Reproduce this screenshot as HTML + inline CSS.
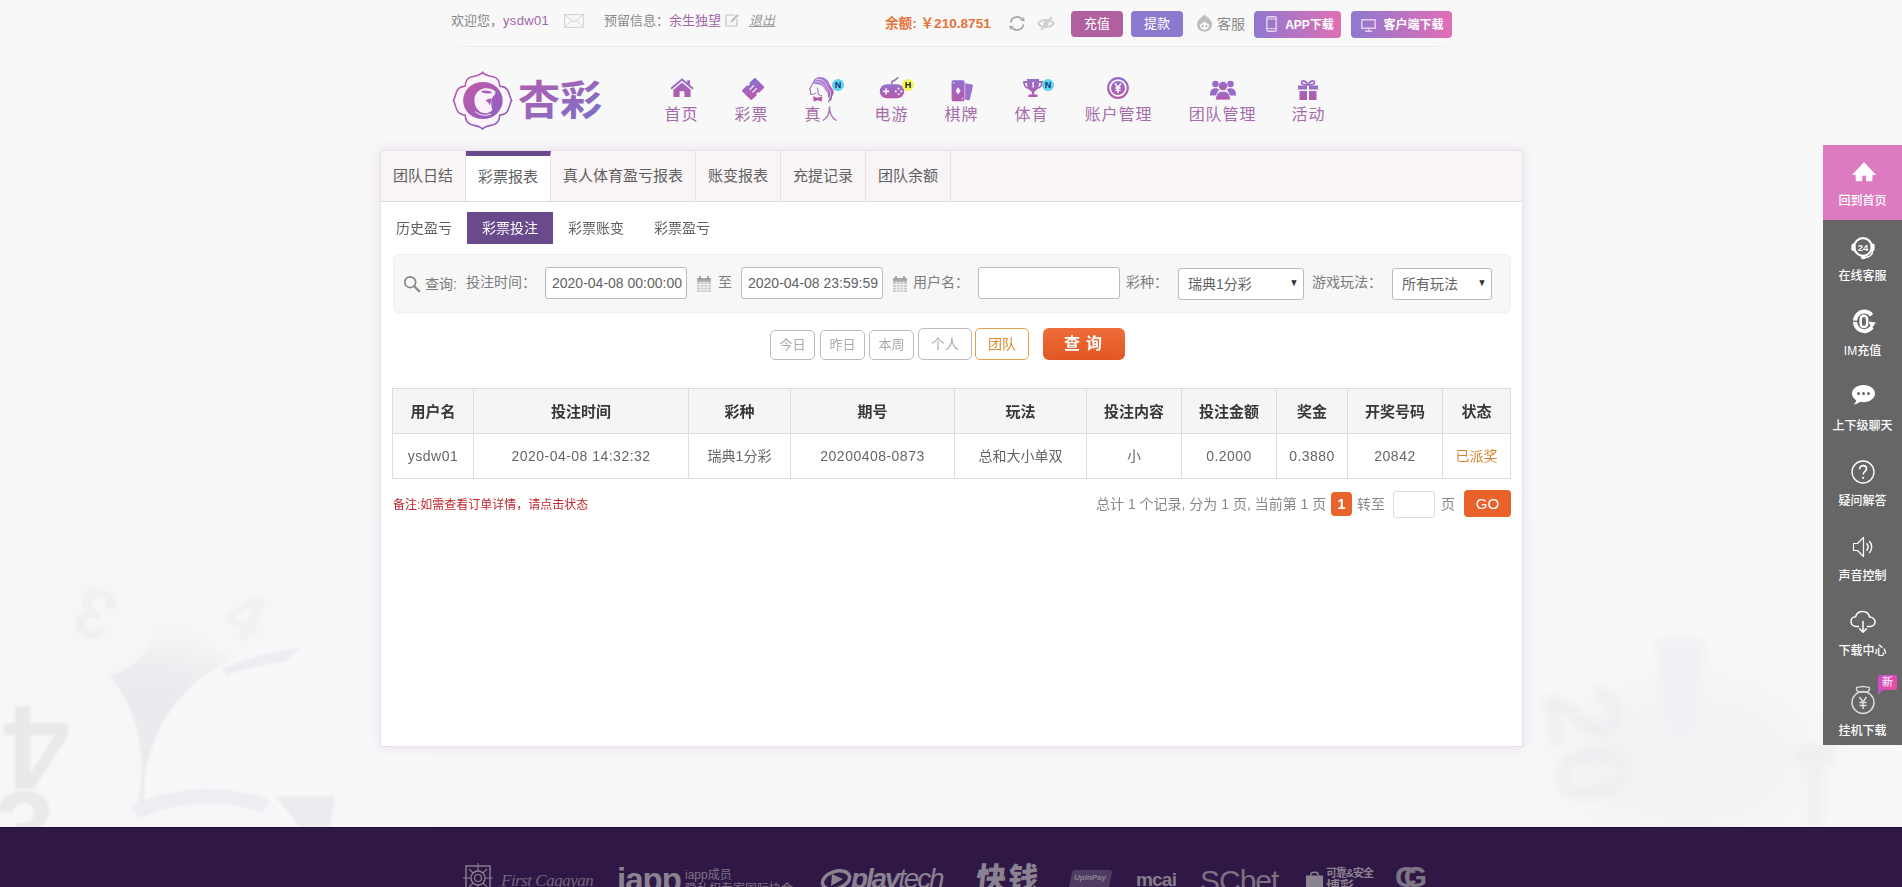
<!DOCTYPE html>
<html lang="zh-CN">
<head>
<meta charset="utf-8">
<title>彩票投注</title>
<style>
*{box-sizing:border-box;margin:0;padding:0}
html,body{width:1902px;height:887px;overflow:hidden}
body{font-family:"Liberation Sans","Noto Sans CJK SC",sans-serif;font-size:13px;color:#666;background:#f8f8f8;position:relative}
a{text-decoration:none;color:inherit}
.abs{position:absolute}
/* background decoration */
#bg{position:absolute;left:0;top:0;width:1902px;height:827px;overflow:hidden}
/* top bar */
#top{position:absolute;left:451px;top:0;width:1001px;height:47px}
#top:after{content:"";position:absolute;left:-5px;right:-5px;top:46px;height:1px;background:linear-gradient(90deg,rgba(233,233,233,0),#e9e9e9 3%,#e9e9e9 97%,rgba(233,233,233,0))}
#top span,#top a{position:absolute;white-space:nowrap;line-height:20px;font-size:13px}
.btn{position:absolute;color:#fff;border-radius:4px;text-align:center;font-size:14px}
/* nav */
#nav{position:absolute;left:451px;top:60px;width:1001px;height:80px}
.ni{position:absolute;top:0;height:80px;text-align:center;color:#a56caa;font-size:16px}
.ni span{position:absolute;left:1px;right:0;top:44px;line-height:22px;white-space:nowrap;letter-spacing:.9px}
.ni svg{position:absolute}
.bd{position:absolute;width:12px;height:12px;border-radius:6px;font:bold 9px/12px "Liberation Sans",sans-serif;text-align:center;font-style:normal}
/* panel */
#panel{position:absolute;left:380px;top:150px;width:1143px;height:597px;background:#fff;border:1px solid #eadfee;box-shadow:0 0 12px rgba(190,160,210,.28)}
#tabs{position:absolute;left:0;top:0;width:1141px;height:51px;background:#f9f5f6;border-bottom:1px solid #ddd}
.tab{position:absolute;top:0;height:50px;line-height:50px;font-size:15px;color:#606060;text-align:center;border-right:1px solid #e6e0e4}
.tab.on{background:#fff;border-top:5px solid #6a4a8c;line-height:41px;height:50px}
.sub{position:absolute;top:61px;height:32px;line-height:32px;font-size:14px;color:#606060;text-align:center}
.sub.on{background:#6a4a8c;color:#fff}
#q{position:absolute;left:12px;top:103px;width:1118px;height:59px;background:#f7f7f7;border:1px solid #f0f0f0;border-radius:6px}
#q span{position:absolute;white-space:nowrap;font-size:14px;color:#7c7c7c;line-height:20px}
.inp{position:absolute;height:32px;background:#fff;border:1px solid #bbb;border-radius:3px;font-size:14px;color:#626262;line-height:30px;white-space:nowrap}
.qb{position:absolute;top:179px;height:30px;border:1px solid #bbb;border-radius:5px;font-size:13px;color:#aaa;text-align:center;line-height:28px;background:#fff}
table{position:absolute;left:11px;top:237px;border-collapse:collapse;width:1118px;table-layout:fixed}
th,td{border:1px solid #ddd;text-align:center;height:45px;font-size:14px;color:#666;font-weight:normal;white-space:nowrap;overflow:hidden}
th{background:#f5f5f5;color:#383838;font-weight:bold;font-size:15px;padding-bottom:1px}
td.l{letter-spacing:.48px}
td.c{padding-bottom:2px}
.ar{position:absolute;right:4px;top:-1px;font-size:10px;font-weight:normal;color:#333;transform:scaleX(.9)}
/* side */
#side{position:absolute;left:1823px;top:145px;width:79px;height:600px;background:#666}
.si{position:absolute;left:0;width:79px;height:75px;color:#fff;font-size:12px;font-weight:500;text-align:center}
.si span{position:absolute;left:0;right:0;top:47px;line-height:18px;white-space:nowrap}
.si svg{position:absolute}
/* footer */
#foot{position:absolute;left:0;top:827px;width:1902px;height:60px;background:#2f1845;overflow:hidden;box-shadow:inset 0 1px 0 #221136}
#foot .g{position:absolute;color:#8a8290;white-space:nowrap}
</style>
</head>
<body>
<div id="bg">
 <svg width="1902" height="827" viewBox="0 0 1902 827" style="position:absolute;left:0;top:0">
  <defs>
   <filter id="b1" filterUnits="userSpaceOnUse" x="-300" y="300" width="2600" height="900"><feGaussianBlur stdDeviation="22"/></filter>
   <filter id="b2"><feGaussianBlur stdDeviation="1.200"/></filter>
   <filter id="b3"><feGaussianBlur stdDeviation="4"/></filter>
   <linearGradient id="bgf" x1="0" y1="0" x2="0" y2="1"><stop offset="0" stop-color="#f8f8f8"/><stop offset=".55" stop-color="#f8f8f8"/><stop offset="1" stop-color="#f7f7f8"/></linearGradient>
  </defs>
  <rect width="1902" height="827" fill="url(#bgf)"/>
  <!-- left cluster -->
  <ellipse cx="140" cy="735" rx="130" ry="90" fill="#ebebef" filter="url(#b1)"/>
  <g filter="url(#b2)">
   <circle cx="95" cy="615" r="62" fill="#f6f6f7"/>
   <circle cx="262" cy="600" r="66" fill="#f6f6f8"/>
   <text x="78" y="650" font-family="'Liberation Sans',sans-serif" font-weight="bold" font-size="70" fill="#f0f0f3" transform="rotate(200 95 620)">3</text>
   <text x="230" y="640" font-family="'Liberation Sans',sans-serif" font-weight="bold" font-size="66" fill="#f1f1f4" transform="rotate(25 250 610)">4</text>
   <circle cx="-8" cy="768" r="150" fill="#f7f7f8"/>
   <circle cx="292" cy="795" r="148" fill="#f8f8f9"/>
   <path d="M222 668 Q262 652 300 648 L286 662 Q254 664 226 676 Z" fill="#ececf3"/>
   <text x="-30" y="790" font-family="'Liberation Sans',sans-serif" font-weight="bold" font-size="120" fill="#e9e9ec" transform="rotate(180 20 748)">4</text>
   <text x="-6" y="868" font-family="'Liberation Sans',sans-serif" font-weight="bold" font-size="110" fill="#eaeaed">3</text>
   <circle cx="205" cy="905" r="120" fill="#f7f7f9"/>
   <path d="M130 806 Q200 776 270 800 L262 812 Q200 792 140 818 Z" fill="#ededf2"/>
   <path d="M275 796 L335 796 L330 827 L300 827 Z" fill="#ececf0"/>
  </g>
  <!-- right cluster -->
  <ellipse cx="1690" cy="760" rx="120" ry="80" fill="#f3f3f5" filter="url(#b1)"/>
  <g filter="url(#b3)">
   <path d="M1655 640 L1705 640 L1690 735 L1672 735 Z" fill="#f0f0f4"/>
   <text transform="translate(1543 694) rotate(80)" font-family="'Liberation Sans',sans-serif" font-weight="bold" font-size="104" fill="#eeeef1">20</text>
   <path d="M1795 745 H1835 V765 H1822 V827 H1808 V765 H1795 Z" fill="#efeff1"/>
  </g>
 </svg>
</div>

<div id="top">
 <span style="left:0;top:11px;color:#888">欢迎您，<a style="position:static;color:#a066a8;letter-spacing:.35px">ysdw01</a></span>
 <span style="left:153px;top:11px;color:#888">预留信息：<a style="position:static;color:#a066a8">余生独望</a></span>
 <a style="left:298px;top:11px;color:#999;font-style:italic;text-decoration:underline">退出</a>
 <span style="left:434px;top:14px;color:#e6733c;font-weight:bold;font-size:13.600px">余额: ￥210.8751</span>
 <a class="btn" style="left:620px;top:11px;width:52px;height:26px;line-height:26px;background:#b0609f">充值</a>
 <a class="btn" style="left:680px;top:11px;width:52px;height:26px;line-height:26px;background:#8b78cf">提款</a>

 <svg class="abs" style="left:113px;top:14px" width="20" height="14" viewBox="0 0 20 14"><rect x=".6" y=".6" width="18.800" height="12.800" fill="none" stroke="#d4d4d4" stroke-width="1.100"/><path d="M.6 .6 L10 8 L19.400 .6 M.6 13.400 L7.600 6.200 M19.400 13.400 L12.400 6.200" fill="none" stroke="#d4d4d4" stroke-width="1"/></svg>
 <svg class="abs" style="left:274px;top:13px" width="15" height="14" viewBox="0 0 15 14"><path d="M10 2 H1 V13 H12 V6" fill="none" stroke="#c4c4c4" stroke-width="1.200"/><path d="M5.500 9.500 L6.200 7 L12.200 1 L14 2.800 L8 8.800 Z" fill="#c4c4c4"/></svg>
 <svg class="abs" style="left:557px;top:15px" width="18" height="17" viewBox="0 0 18 17"><path d="M2.600 7.600 A6.400 6.400 0 0 1 14.600 5.400 M15.400 9.400 A6.400 6.400 0 0 1 3.400 11.600" fill="none" stroke="#a8a8a8" stroke-width="1.700"/><path d="M12.300 6 L16.800 6.300 L15.800 2 Z M5.700 11 L1.200 10.700 L2.200 15 Z" fill="#a8a8a8"/></svg>
 <svg class="abs" style="left:586px;top:16px" width="18" height="15" viewBox="0 0 18 15"><path d="M1.200 7.500 C4 2.800 14 2.800 16.800 7.500 C14 12.200 4 12.200 1.200 7.500 Z" fill="none" stroke="#cfcfcf" stroke-width="2"/><circle cx="9" cy="7.500" r="2.600" fill="#cfcfcf"/><path d="M14.600 1.200 L4.200 13.800" stroke="#cfcfcf" stroke-width="2"/></svg>
 <svg class="abs" style="left:745px;top:14px" width="17" height="18" viewBox="0 0 17 18"><path d="M8.500 .5 C9.500 2.500 16 5 16 10.500 C16 15 12.500 17.500 8.500 17.500 C4.500 17.500 1 15 1 10.500 C1 5 7.500 2.500 8.500 .5 Z" fill="#bdbdbd"/><path d="M3.800 10.500 C5.500 9.800 6.800 9 8.500 7.500 C10.200 9 11.500 9.800 13.200 10.500 C13.200 14 11 15.800 8.500 15.800 C6 15.800 3.800 14 3.800 10.500 Z" fill="#f8f8f8"/><circle cx="6.600" cy="12.200" r=".9" fill="#999"/><circle cx="10.400" cy="12.200" r=".9" fill="#999"/></svg>
 <span style="left:766px;top:14px;color:#888;font-size:14px">客服</span>
 <a class="btn" style="left:803px;top:11px;width:87px;height:27px;line-height:29px;font-size:12px;font-weight:bold;background:linear-gradient(90deg,#8f78d0,#e06fb4);padding-left:24px"><svg style="position:absolute;left:12px;top:5px" width="11" height="16" viewBox="0 0 11 16"><rect x=".8" y=".8" width="9.400" height="14.400" rx="1.500" fill="none" stroke="#e9d3f3" stroke-width="1.400"/><path d="M1 3 H10 M1 12.600 H10" stroke="#e9d3f3" stroke-width="1"/></svg>APP下载</a>
 <a class="btn" style="left:900px;top:11px;width:101px;height:27px;line-height:29px;font-size:12px;font-weight:bold;background:linear-gradient(90deg,#8f78d0,#e06fb4);padding-left:24px"><svg style="position:absolute;left:10px;top:8px" width="15" height="13" viewBox="0 0 15 13"><rect x=".8" y=".8" width="13.400" height="8.400" fill="none" stroke="#e6cdf0" stroke-width="1.500"/><path d="M7.500 9 V12 M4 12.200 H11" stroke="#e6cdf0" stroke-width="1.500"/></svg>客户端下载</a>
</div>

<div id="nav">
 <!-- logo -->
 <svg class="abs" style="left:0;top:8px" width="160" height="66" viewBox="0 0 160 66">
  <defs>
   <linearGradient id="lg1" x1="0" y1="0" x2="1" y2="1"><stop offset="0" stop-color="#c45aa8"/><stop offset="1" stop-color="#8a62c4"/></linearGradient>
   <linearGradient id="lg2" x1="0" y1="0" x2="1" y2="1"><stop offset="0" stop-color="#b65cb0"/><stop offset="1" stop-color="#7672c8"/></linearGradient>
  </defs>
  <path d="M31.500 4.200 C29 7.500 24 8 20.700 8.700 C17 9.500 14.500 12 14.200 18.100 C11 18.500 8.500 19.500 7.300 20.900 C4.500 24 4.500 29 2.400 32.500 C4.500 36 4.500 41 7.300 44.200 C8.500 45.600 11 46.600 14.200 47.100 C14.500 53 17 55.800 20.700 56.800 C24 57.500 29 58 31.500 61.100 C34 58 39 57.500 42.300 56.800 C46 55.800 48.500 53 48.800 47.100 C52 46.600 54.500 45.600 55.700 44.200 C58.500 41 58.500 36 60.600 32.500 C58.500 29 58.500 24 55.700 20.900 C54.500 19.500 52 18.500 48.800 18.100 C48.500 12 46 9.500 42.300 8.700 C39 8 34 7.500 31.500 4.200 Z" fill="#fcf5fc" stroke="url(#lg1)" stroke-width="1.600" stroke-linejoin="round"/>
  <ellipse cx="31.900" cy="32.500" rx="19.800" ry="18.600" fill="url(#lg1)"/>
  <path d="M29.600 21.700 C34 19.300 40 19.800 44.400 23.400 C45 25.500 43 27.500 41 30 C39.500 33 40.500 38 41.400 42 C38 45.800 33.500 45.800 30.500 44.600 C26.500 42.600 23.400 38 23.400 31.500 C23.400 27 26 23.500 29.600 21.700 Z" fill="#fbf2fb"/>
  <path d="M29.500 23.600 C33 21.800 38 22.200 41.500 24.600 C38 26 33 25.800 29.500 23.600 Z" fill="url(#lg1)"/>
  <path d="M40.200 30.500 C37 30.500 35.200 31.800 34.600 33.600 C36.600 33.400 38 34.800 38.400 37.500 C39.600 35.500 40.400 33 40.200 30.500 Z" fill="url(#lg1)"/>
  <path d="M24 43.500 C28 47 34 48.500 40 46" fill="none" stroke="#fbf2fb" stroke-width="1"/>
  <text x="67" y="47" font-family="'Liberation Sans','Noto Sans CJK SC',sans-serif" font-weight="700" font-size="41" fill="url(#lg2)" textLength="84" lengthAdjust="spacingAndGlyphs">杏彩</text>
 </svg>
 <svg width="0" height="0" style="position:absolute"><defs>
  <linearGradient id="ig" x1="0" y1="0" x2="0" y2="1"><stop offset="0" stop-color="#9470cc"/><stop offset="1" stop-color="#b45aaa"/></linearGradient>
  <linearGradient id="ig2" x1="0" y1="0" x2="1" y2="1"><stop offset="0" stop-color="#8f72d2"/><stop offset="1" stop-color="#c05aa6"/></linearGradient>
 </defs></svg>
 <div class="ni" style="left:180px;width:100px">
  <svg style="left:38px;top:17px" width="26" height="21" viewBox="0 0 26 21"><path d="M13 1.2 L18.2 5.6 V3.2 H21 V8 L24.6 11 L23.3 12.4 L13 3.8 L2.7 12.4 L1.4 11 Z M13 5.6 L21.6 12.8 V20 H15.4 V14.2 H10.6 V20 H4.4 V12.8 Z" fill="url(#ig)"/></svg>
  <span>首页</span></div>
 <div class="ni" style="left:250px;width:100px">
  <svg style="left:41px;top:18px" width="23" height="23" viewBox="0 0 23 23"><defs><linearGradient id="ig3" gradientUnits="userSpaceOnUse" x1="5" y1="-7" x2="-5" y2="7"><stop offset="0" stop-color="#8a6ed2"/><stop offset="1" stop-color="#bc5aac"/></linearGradient></defs><g transform="translate(11.100 11) rotate(-45)"><path d="M-9.400 -5.600 A1.300 1.300 0 0 1 -8.100 -6.900 H-1.500 A1.500 1.500 0 0 0 1.500 -6.900 H8.100 A1.300 1.300 0 0 1 9.400 -5.600 V5.600 A1.300 1.300 0 0 1 8.100 6.900 H1.500 A1.500 1.500 0 0 0 -1.500 6.900 H-8.100 A1.300 1.300 0 0 1 -9.400 5.600 Z" fill="url(#ig3)"/><path d="M-3 -2 H3.200 M-3 2 H3.200" stroke="#f3e6f8" stroke-width="1.300"/></g></svg>
  <span>彩票</span></div>
 <div class="ni" style="left:320px;width:100px">
  <svg style="left:37px;top:16px" width="27" height="28" viewBox="0 0 27 28"><defs><linearGradient id="gh" x1="0" y1="0" x2="1" y2="1"><stop offset="0" stop-color="#a48cdc"/><stop offset=".6" stop-color="#b06cc0"/><stop offset="1" stop-color="#8a5a9a"/></linearGradient></defs><path d="M4.600 7.200 C5 3.400 8.500 .8 12.500 1 C17 1.200 20 4 21.200 7.500 C22 10 24.800 12.200 25.600 15.200 C26.400 18.200 23.600 19.600 24 22 C24.300 24 21.500 25 20 26.800 C19.600 25.400 21.800 23.800 20.600 21.800 C19.400 19.800 20.600 17.400 18.400 15.600 C16.400 14 16.600 11 14 9.400 C11.600 7.900 8 8.400 4.600 7.200 Z" fill="url(#gh)"/><path d="M8 3.600 C13 2.400 17.500 5 18.600 9.400 C19.400 12.400 22.400 13.600 22.600 16.800 C22.800 19.400 21.600 21 22 23" fill="none" stroke="#f3eafa" stroke-width=".7"/><path d="M7 5.600 C11.500 5 15.400 7 16.600 10.600 C17.400 13.200 20 14.600 20.200 17.400" fill="none" stroke="#f3eafa" stroke-width=".6"/><path d="M4.600 7.200 C3.600 9.400 3.400 10.800 1.600 13.200 C2.600 13.800 2.800 14.600 2.400 15.600 C2.800 16.400 3 17.400 2.800 18.400 C4.800 18.800 6.400 18.200 7.600 17.200 M9.400 12 C10.200 13.600 10.400 15.400 9.800 17.400 C10.600 18.800 12.200 19.600 13.800 19.800" fill="none" stroke="#9b78bc" stroke-width="1.100" stroke-linecap="round"/><path d="M5 20.200 L9.400 21.800 L14.400 20.600 L13.600 25.400 L9.400 24.200 L5.800 25.800 Z" fill="#b85aa6"/></svg>
  <i class="bd" style="left:61px;top:19px;background:#5fd2ee;color:#0f3a70">N</i>
  <span>真人</span></div>
 <div class="ni" style="left:390px;width:100px">
  <svg style="left:38px;top:16px" width="27" height="24" viewBox="0 0 27 24"><path d="M12.800 7.800 C12.600 4.800 14.400 4.600 15.800 4.200 C17.200 3.800 17.200 2.400 19 1.600" fill="none" stroke="#8f6fae" stroke-width="1.500" stroke-linecap="round"/><rect x=".8" y="8.200" width="24.400" height="14" rx="7" fill="url(#ig)"/><path d="M6.300 12.300 h1.600 v2.300 h2.300 v1.600 h-2.300 v2.300 h-1.600 v-2.300 h-2.300 v-1.600 h2.300 Z" fill="#f6ecfa"/><circle cx="19.600" cy="12.600" r="1.050" fill="#f6ecfa"/><circle cx="19.600" cy="18.200" r="1.050" fill="#f6ecfa"/><circle cx="16.800" cy="15.400" r="1.050" fill="#f6ecfa"/><circle cx="22.400" cy="15.400" r="1.050" fill="#f6ecfa"/></svg>
  <i class="bd" style="left:61px;top:19px;background:#f3f35c;color:#222">H</i>
  <span>电游</span></div>
 <div class="ni" style="left:460px;width:100px">
  <svg style="left:40px;top:19px" width="24" height="24" viewBox="0 0 24 24"><path d="M14.200 4.200 L21 5.400 Q22.300 5.700 22 7 L18.800 20.400 Q18.500 21.600 17.200 21.300 L14.200 20.600 Z" fill="#9c72cc"/><rect x=".6" y="1.200" width="13" height="21" rx="1.600" fill="url(#ig)"/><path d="M7.100 8.200 L9.600 11.800 L7.100 15.400 L4.600 11.800 Z" fill="#fbf0fb"/><path d="M2 3 L3.600 3 L2.800 5.200 Z M12.200 20.400 L10.600 20.400 L11.400 18.200 Z" fill="#f3def3"/></svg>
  <span>棋牌</span></div>
 <div class="ni" style="left:530px;width:100px">
  <svg style="left:41px;top:18px" width="22" height="20" viewBox="0 0 22 20"><path d="M5 1 H17 V3 H21 C21 8 18.500 10.500 15.500 11 C14.500 12.500 13.200 13.300 12.200 13.600 V16.500 H15.500 V19 H6.500 V16.500 H9.800 V13.600 C8.800 13.300 7.500 12.500 6.500 11 C3.500 10.500 1 8 1 3 H5 Z M3 5 C3.200 7.200 4.200 8.500 5.600 9.100 C5.200 7.900 5 6.500 5 5 Z M19 5 H17 C17 6.500 16.800 7.900 16.400 9.100 C17.800 8.500 18.800 7.200 19 5 Z" fill="url(#ig)" fill-rule="evenodd"/><path d="M10.300 4.500 L11.800 3.600 V9.600 H10.500 V5.600 L9.800 6 Z" fill="#fff"/></svg>
  <i class="bd" style="left:61px;top:19px;background:#5fd2ee;color:#0f3a70">N</i>
  <span>体育</span></div>
 <div class="ni" style="left:597px;width:140px">
  <svg style="left:58px;top:16px" width="24" height="24" viewBox="0 0 24 24"><circle cx="12" cy="12" r="9.800" fill="none" stroke="url(#ig)" stroke-width="2.200"/><circle cx="12" cy="12" r="7" fill="url(#ig)"/><path d="M9 7.500 L12 11.500 L15 7.500 M12 11.500 V17 M9.300 12 H14.700 M9.300 14.400 H14.700" fill="none" stroke="#fff" stroke-width="1.400"/></svg>
  <span>账户管理</span></div>
 <div class="ni" style="left:701px;width:140px">
  <svg style="left:57px;top:18px" width="28" height="23" viewBox="0 0 28 23"><circle cx="6.500" cy="6" r="3.300" fill="#9a6cc8"/><circle cx="21.500" cy="6" r="3.300" fill="#9a6cc8"/><path d="M1 17 C1 12.500 3 10.300 6.500 10.300 C8.200 10.300 9.500 10.800 10.300 11.800 C8.600 13.200 7.800 15 7.600 17.500 H1 Z" fill="#9a6cc8"/><path d="M27 17 C27 12.500 25 10.300 21.500 10.300 C19.800 10.300 18.500 10.800 17.700 11.800 C19.400 13.200 20.200 15 20.400 17.500 H27 Z" fill="#9a6cc8"/><circle cx="14" cy="8" r="4.200" fill="url(#ig)"/><path d="M6.500 22 C6.500 16.500 9.300 13.200 14 13.200 C18.700 13.200 21.500 16.500 21.500 22 Z" fill="url(#ig)" stroke="#f8f8f8" stroke-width=".8"/></svg>
  <span>团队管理</span></div>
 <div class="ni" style="left:807px;width:100px">
  <svg style="left:39px;top:19px" width="22" height="22" viewBox="0 0 22 22"><path d="M11 6 C9 2 5.500 .8 4.600 2.800 C3.800 4.800 7 6 11 6 Z M11 6 C13 2 16.500 .8 17.400 2.800 C18.200 4.800 15 6 11 6 Z" fill="none" stroke="#9a6cc8" stroke-width="1.700"/><path d="M1 6.500 H10 V10.500 H1 Z M12 6.500 H21 V10.500 H12 Z M2.500 12 H10 V21 H2.500 Z M12 12 H19.500 V21 H12 Z" fill="url(#ig)"/></svg>
  <span>活动</span></div>
</div>

<div id="panel">
 <div id="tabs">
  <div class="tab" style="left:0;width:85px">团队日结</div>
  <div class="tab on" style="left:85px;width:85px">彩票报表</div>
  <div class="tab" style="left:170px;width:145px">真人体育盈亏报表</div>
  <div class="tab" style="left:315px;width:85px">账变报表</div>
  <div class="tab" style="left:400px;width:85px">充提记录</div>
  <div class="tab" style="left:485px;width:85px">团队余额</div>
 </div>
 <div class="sub" style="left:0;width:86px">历史盈亏</div>
 <div class="sub on" style="left:86px;width:86px">彩票投注</div>
 <div class="sub" style="left:172px;width:86px">彩票账变</div>
 <div class="sub" style="left:258px;width:86px">彩票盈亏</div>

 <div id="q">
  <svg class="abs" style="left:9px;top:20px" width="18" height="18" viewBox="0 0 18 18"><circle cx="7.200" cy="7.200" r="5.400" fill="none" stroke="#888" stroke-width="1.700"/><path d="M11.200 11.200 L16.200 16.200" stroke="#888" stroke-width="2.200" stroke-linecap="round"/></svg>
  <span style="left:31px;top:19px">查询:</span>
  <span style="left:72px;top:17px">投注时间：</span>
  <div class="inp" style="left:151px;top:12px;width:142px;padding-left:6px">2020-04-08 00:00:00</div>
  <svg class="abs cal" style="left:302px;top:20px" width="16" height="18" viewBox="0 0 16 18"><path d="M1 3 H15 V17 H1 Z" fill="#c9c9c9"/><path d="M1 3 H15 V6.500 H1 Z" fill="#aaa"/><path d="M4 1 V5 M12 1 V5" stroke="#999" stroke-width="1.600"/><path d="M4.700 7 V17 M8 7 V17 M11.300 7 V17 M1 9.600 H15 M1 12.200 H15 M1 14.800 H15" stroke="#f7f7f7" stroke-width=".9"/></svg>
  <span style="left:324px;top:17px">至</span>
  <div class="inp" style="left:347px;top:12px;width:142px;padding-left:6px">2020-04-08 23:59:59</div>
  <svg class="abs cal" style="left:498px;top:20px" width="16" height="18" viewBox="0 0 16 18"><path d="M1 3 H15 V17 H1 Z" fill="#c9c9c9"/><path d="M1 3 H15 V6.500 H1 Z" fill="#aaa"/><path d="M4 1 V5 M12 1 V5" stroke="#999" stroke-width="1.600"/><path d="M4.700 7 V17 M8 7 V17 M11.300 7 V17 M1 9.600 H15 M1 12.200 H15 M1 14.800 H15" stroke="#f7f7f7" stroke-width=".9"/></svg>
  <span style="left:519px;top:17px">用户名：</span>
  <div class="inp" style="left:584px;top:12px;width:142px"></div>
  <span style="left:732px;top:17px">彩种：</span>
  <div class="inp" style="left:784px;top:13px;width:126px;padding-left:9px">瑞典1分彩<b class="ar">▼</b></div>
  <span style="left:918px;top:17px">游戏玩法：</span>
  <div class="inp" style="left:998px;top:13px;width:100px;padding-left:9px">所有玩法<b class="ar">▼</b></div>
 </div>

 <div class="qb" style="left:389px;width:45px">今日</div>
 <div class="qb" style="left:439px;width:45px">昨日</div>
 <div class="qb" style="left:488px;width:45px">本周</div>
 <div class="qb" style="left:537px;width:54px;top:177px;height:32px;line-height:30px;font-size:14px">个人</div>
 <div class="qb" style="left:594px;width:54px;top:177px;height:32px;line-height:30px;font-size:14px;color:#e08a30;border-color:#e0a050">团队</div>
 <div class="abs" style="left:662px;top:177px;width:82px;height:32px;border-radius:6px;background:linear-gradient(#ee6c38,#e25724);color:#fff;font-size:16px;font-weight:bold;line-height:31px;text-align:center;letter-spacing:6px;padding-left:4px">查询</div>

 <table>
  <colgroup><col style="width:81px"><col style="width:215px"><col style="width:102px"><col style="width:164px"><col style="width:132px"><col style="width:95px"><col style="width:95px"><col style="width:71px"><col style="width:95px"><col style="width:68px"></colgroup>
  <tr><th>用户名</th><th>投注时间</th><th>彩种</th><th>期号</th><th>玩法</th><th>投注内容</th><th>投注金额</th><th>奖金</th><th>开奖号码</th><th>状态</th></tr>
  <tr><td class="l">ysdw01</td><td class="l">2020-04-08 14:32:32</td><td class="c">瑞典1分彩</td><td class="l">20200408-0873</td><td class="c">总和大小单双</td><td class="c">小</td><td class="l">0.2000</td><td class="l">0.3880</td><td class="l">20842</td><td class="c" style="color:#d9822b">已派奖</td></tr>
 </table>

 <div class="abs" style="left:12px;top:345px;font-size:12px;color:#c0272d;line-height:18px;white-space:nowrap">备注:如需查看订单详情，请点击状态</div>
 <div class="abs" style="left:715px;top:342px;font-size:14px;color:#888;line-height:22px;white-space:nowrap">总计 1 个记录, 分为 1 页, 当前第 1 页</div>
 <div class="abs" style="left:950px;top:341px;width:21px;height:24px;border-radius:4px;background:#e8622c;color:#fff;font-weight:bold;font-size:15px;line-height:23px;text-align:center">1</div>
 <div class="abs" style="left:976px;top:342px;font-size:14px;color:#888;line-height:22px;white-space:nowrap">转至</div>
 <div class="abs" style="left:1012px;top:340px;width:42px;height:27px;border:1px solid #ddd;border-radius:3px;background:#fff"></div>
 <div class="abs" style="left:1060px;top:342px;font-size:14px;color:#888;line-height:22px">页</div>
 <div class="abs" style="left:1083px;top:339px;width:47px;height:27px;border-radius:4px;background:#e8622c;color:#fff;font-size:15px;line-height:27px;text-align:center">GO</div>
</div>

<div id="side">
 <div class="si" style="top:0;background:#dc7ac2">
  <svg style="left:26px;top:15px" width="30" height="24" viewBox="0 0 30 24"><path d="M15 2.600 L26.400 14.600 H23 V20.800 H17.400 V15.200 H12.800 V20.800 H7.200 V14.600 H3.800 Z" fill="#fff" stroke="#fff" stroke-width=".8" stroke-linejoin="round"/></svg>
  <span>回到首页</span></div>
 <div class="si" style="top:75px">
  <svg style="left:27px;top:15px" width="26" height="26" viewBox="0 0 26 26"><circle cx="13" cy="12" r="8.800" fill="none" stroke="#fff" stroke-width="2.200"/><rect x="1.400" y="8.600" width="4" height="7.400" rx="1.800" fill="#fff"/><rect x="20.600" y="8.600" width="4" height="7.400" rx="1.800" fill="#fff"/><path d="M22.600 16 C22.600 20 19 22.400 14.500 22.600" fill="none" stroke="#fff" stroke-width="1.600"/><ellipse cx="13.200" cy="22.600" rx="2.400" ry="1.700" fill="#fff"/><text x="13" y="15.600" text-anchor="middle" font-family="'Liberation Sans',sans-serif" font-weight="bold" font-size="9.500" fill="#fff">24</text></svg>
  <span>在线客服</span></div>
 <div class="si" style="top:150px">
  <svg style="left:28px;top:14px" width="27" height="26" viewBox="0 0 27 26"><path d="M20.600 6.200 A9.400 9.800 0 1 0 20.900 18.200" fill="none" stroke="#fff" stroke-width="4"/><path d="M17.600 12.600 L24.800 13.400 L20.600 19.800 Z" fill="#fff"/><path d="M1 12.300 H6" stroke="#666" stroke-width="1.300"/><rect x="9.700" y="6.700" width="6.400" height="11.400" rx="3.200" fill="none" stroke="#fff" stroke-width="2.500"/></svg>
  <span>IM充值</span></div>
 <div class="si" style="top:225px">
  <svg style="left:27px;top:13px" width="27" height="24" viewBox="0 0 27 24"><path d="M13.500 2 C20 2 25 5.800 25 10.600 C25 15.400 20 19.200 13.500 19.200 C12.300 19.200 11.200 19.100 10.100 18.800 C8.600 20.300 6.300 21.300 3.800 21.500 C5.200 20.300 6 18.800 6.100 17.200 C3.600 15.600 2 13.300 2 10.600 C2 5.800 7 2 13.500 2 Z" fill="#fff"/><circle cx="8.500" cy="10.600" r="1.500" fill="#666"/><circle cx="13.500" cy="10.600" r="1.500" fill="#666"/><circle cx="18.500" cy="10.600" r="1.500" fill="#666"/></svg>
  <span>上下级聊天</span></div>
 <div class="si" style="top:300px">
  <svg style="left:27px;top:14px" width="26" height="26" viewBox="0 0 26 26"><circle cx="13" cy="13" r="11" fill="none" stroke="#fff" stroke-width="1.300"/><path d="M9.600 10.200 C9.600 7.800 11.200 6.600 13.100 6.600 C15 6.600 16.500 7.800 16.500 9.700 C16.500 12.400 13.100 12.600 13.100 15.600" fill="none" stroke="#fff" stroke-width="1.600"/><circle cx="13.100" cy="18.800" r="1.100" fill="#fff"/></svg>
  <span>疑问解答</span></div>
 <div class="si" style="top:375px">
  <svg style="left:27px;top:14px" width="26" height="26" viewBox="0 0 26 26"><path d="M3.500 9.500 H7.500 L13.500 3.500 V22.500 L7.500 16.500 H3.500 Z" fill="none" stroke="#fff" stroke-width="1.200" stroke-linejoin="round"/><path d="M16.800 9.800 C18.300 11.600 18.300 14.400 16.800 16.200" fill="none" stroke="#fff" stroke-width="1.400" stroke-linecap="round"/><path d="M19.600 7.600 C22.400 10.600 22.400 15.400 19.600 18.400" fill="none" stroke="#fff" stroke-width="1.400" stroke-linecap="round"/></svg>
  <span>声音控制</span></div>
 <div class="si" style="top:450px">
  <svg style="left:26px;top:14px" width="28" height="26" viewBox="0 0 28 26"><path d="M9.500 17.500 H7.500 C4.200 17.500 2 15.200 2 12.500 C2 9.800 4.100 7.800 6.600 7.700 C7.400 4.600 10.200 2.500 13.500 2.500 C17 2.500 19.900 4.800 20.600 8 C23.600 8.100 26 10.200 26 13 C26 15.600 23.800 17.500 21 17.500 H18.500" fill="none" stroke="#fff" stroke-width="1.500" stroke-linecap="round"/><path d="M14 12.500 V23 M10.600 19.800 L14 23.200 L17.400 19.800" fill="none" stroke="#fff" stroke-width="1.500" stroke-linecap="round" stroke-linejoin="round"/></svg>
  <span>下载中心</span></div>
 <div class="si" style="top:525px">
  <svg style="left:25px;top:14px" width="30" height="32" viewBox="0 0 30 32"><path d="M10.500 8 C8.500 6.500 8 4.500 9 3 C10.500 4 12.500 2.500 15 2.500 C17.500 2.500 19.500 4 21 3 C22 4.500 21.500 6.500 19.500 8 Z" fill="none" stroke="#ddd" stroke-width="1.300" stroke-linejoin="round"/><circle cx="15" cy="18.500" r="11" fill="none" stroke="#ddd" stroke-width="1.400"/><path d="M11.500 13 L15 18 L18.500 13 M15 18 V25 M11.500 18.600 H18.500 M11.500 21.600 H18.500" fill="none" stroke="#ddd" stroke-width="1.500"/></svg>
  <i class="abs" style="left:55px;top:5px;width:19px;height:15px;background:linear-gradient(135deg,#c64fd0,#f04a9c);font:normal 11px/15px 'Liberation Sans','Noto Sans CJK SC',sans-serif;color:#fff;border-radius:2px">新</i>
  <i class="abs" style="left:55px;top:19px;border:3px solid transparent;border-top-color:#c64fd0;border-left-color:#c64fd0"></i>
  <span style="top:52px">挂机下载</span></div>
</div>
<div id="foot">
 <svg class="abs" style="left:463px;top:36px" width="30" height="30" viewBox="0 0 30 30"><rect x="3" y="3" width="24" height="24" fill="none" stroke="#8a8390" stroke-width="1.400"/><path d="M15 0 V30 M0 15 H30 M6 6 L24 24 M24 6 L6 24" stroke="#8a8390" stroke-width="1.100"/><circle cx="15" cy="15" r="7" fill="#2f1845" stroke="#8a8390" stroke-width="1.300"/><circle cx="15" cy="15" r="3.500" fill="none" stroke="#8a8390" stroke-width="1.200"/></svg>
 <div class="g" style="left:501px;top:42px;font:italic 17px/24px 'Liberation Serif',serif;letter-spacing:-.5px;color:#6f6678">First Cagayan</div>
 <div class="g" style="left:617px;top:35px;font:bold 33px/36px 'Liberation Sans',sans-serif;letter-spacing:-1px">iapp</div>
 <div class="g" style="left:685px;top:41px;font:12px/14px 'Liberation Sans','Noto Sans CJK SC',sans-serif;color:#7d7486">iapp成员<br>隐私权专家国际协会</div>
 <svg class="abs" style="left:820px;top:40px" width="34" height="22" viewBox="0 0 34 22"><ellipse cx="16" cy="13" rx="14" ry="8.500" fill="none" stroke="#8a8390" stroke-width="3.500" transform="rotate(-18 16 13)"/><path d="M12 7 L23 12 L11 19 Z" fill="#8a8390"/></svg>
 <div class="g" style="left:851px;top:36px;font:italic bold 28px/32px 'Liberation Sans',sans-serif;letter-spacing:-2.200px">play<span style="font-weight:normal">tech</span></div>
 <div class="g" style="left:976px;top:35px;font:900 30px/34px 'Liberation Sans','Noto Sans CJK SC',sans-serif;letter-spacing:2px;transform:skewX(-6deg)">快钱</div>
 <div class="abs" style="left:1070px;top:43px;width:40px;height:24px;background:#4f3c63;border-radius:3px;transform:skewX(-12deg)"></div>
 <div class="g" style="left:1074px;top:46px;font:italic bold 8px/10px 'Liberation Sans',sans-serif;color:#8a8390">UpInPay</div>
 <div class="g" style="left:1136px;top:41px;font:bold 19px/24px 'Liberation Sans',sans-serif;letter-spacing:-.8px;color:#857d8c">mcai</div>
 <div class="g" style="left:1200px;top:37px;font:30px/34px 'Liberation Sans',sans-serif;letter-spacing:-1px;color:#7b7283">SCbet</div>
 <svg class="abs" style="left:1305px;top:43px" width="19" height="20" viewBox="0 0 19 20"><path d="M5.500 6 C5.500 1 13.500 1 13.500 6" fill="none" stroke="#8a8390" stroke-width="1.400"/><rect x="1" y="5.500" width="17" height="15" fill="#8a8390"/></svg>
 <div class="g" style="left:1326px;top:40px;font:bold 11px/13px 'Liberation Sans','Noto Sans CJK SC',sans-serif;letter-spacing:-1px">可靠&amp;安全<br><span style="font-size:14px;letter-spacing:0">博彩</span></div>
 <div class="g" style="left:1395px;top:33px;font:bold 30px/34px 'Liberation Sans',sans-serif;letter-spacing:-13px;color:#7d7486">CG</div>
</div>
</body>
</html>
